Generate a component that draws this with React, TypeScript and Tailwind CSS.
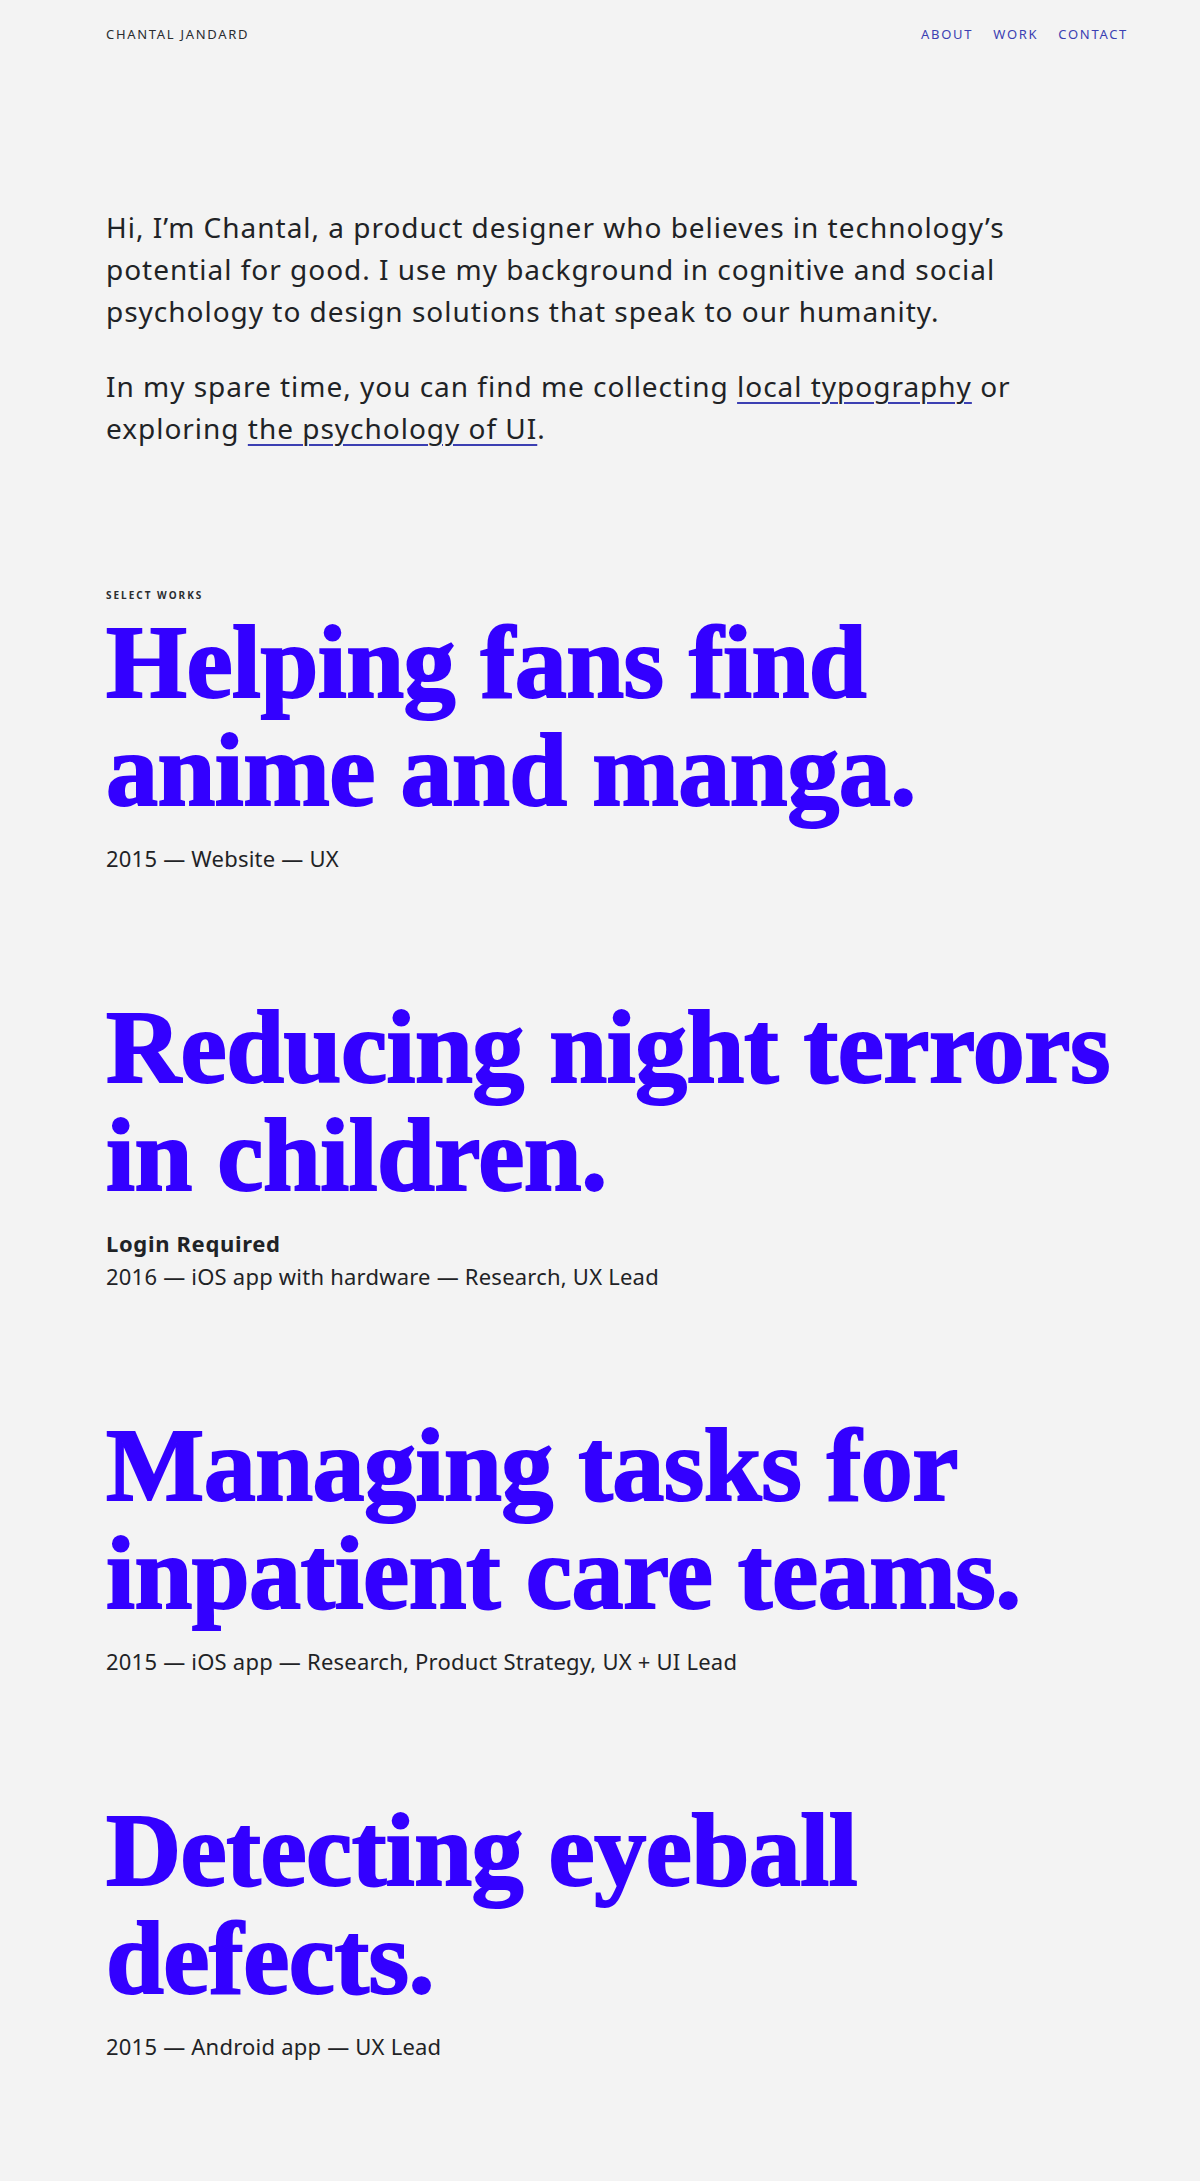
import React from "react";

const sans = "font-['Noto_Sans',sans-serif]";
const body = `${sans} tracking-[0.035em]`;

function Project({
  lines,
  meta,
  extra,
}: {
  lines: string[];
  meta: string;
  extra?: string;
}) {
  return (
    <article className="mb-[118px]">
      <h2 className="font-['Liberation_Serif',serif] text-[104px] font-bold leading-[108px] tracking-[-0.5px] text-[#3300ff] [-webkit-text-stroke:2px_#3300ff]">
        {lines.map((l, i) => (
          <span key={i} className="block">
            {l}
          </span>
        ))}
      </h2>
      <div className={`mt-[18px] text-[22px] leading-[33px] text-[#1f2326] ${sans}`}>
        {extra && <p className="font-bold tracking-[0.03em]">{extra}</p>}
        <p className="tracking-[0.01em]">{meta}</p>
      </div>
    </article>
  );
}

export default function App() {
  return (
    <div className="min-h-[2181px] bg-[#f3f3f3] pl-[106px] pr-[72px]">
      <header
        className={`flex h-[70px] items-center justify-between text-[13px] uppercase ${sans} tracking-[1.7px]`}
      >
        <div className="text-[#2a2d30]">Chantal Jandard</div>
        <nav className="flex gap-[20px] text-[#3b3fb2]">
          <a href="#">About</a>
          <a href="#">Work</a>
          <a href="#">Contact</a>
        </nav>
      </header>

      <section className={`mt-[136px] text-[28px] leading-[42px] text-[#1f2326] ${body}`}>
        <p>
          Hi, I’m Chantal, a product designer who believes in technology’s
          <br />
          potential for good. I use my background in cognitive and social
          <br />
          psychology to design solutions that speak to our humanity.
        </p>
        <p className="mt-[33px]">
          In my spare time, you can find me collecting{" "}
          <a
            href="#"
            className="underline decoration-[#3b3fb2] decoration-2 underline-offset-[5px]"
          >
            local typography
          </a>{" "}
          or
          <br />
          exploring{" "}
          <a
            href="#"
            className="underline decoration-[#3b3fb2] decoration-2 underline-offset-[5px]"
          >
            the psychology of UI
          </a>
          .
        </p>
      </section>

      <section className="mt-[139px]">
        <div
          className={`text-[10px] leading-[14px] font-bold uppercase text-[#2a2d30] ${sans} tracking-[2px]`}
        >
          Select Works
        </div>
        <div className="mt-[6px]">
          <Project lines={["Helping fans find", "anime and manga."]} meta="2015 — Website — UX" />
          <Project
            lines={["Reducing night terrors", "in children."]}
            extra="Login Required"
            meta="2016 — iOS app with hardware — Research, UX Lead"
          />
          <Project
            lines={["Managing tasks for", "inpatient care teams."]}
            meta="2015 — iOS app — Research, Product Strategy, UX + UI Lead"
          />
          <Project lines={["Detecting eyeball", "defects."]} meta="2015 — Android app — UX Lead" />
        </div>
      </section>
    </div>
  );
}
